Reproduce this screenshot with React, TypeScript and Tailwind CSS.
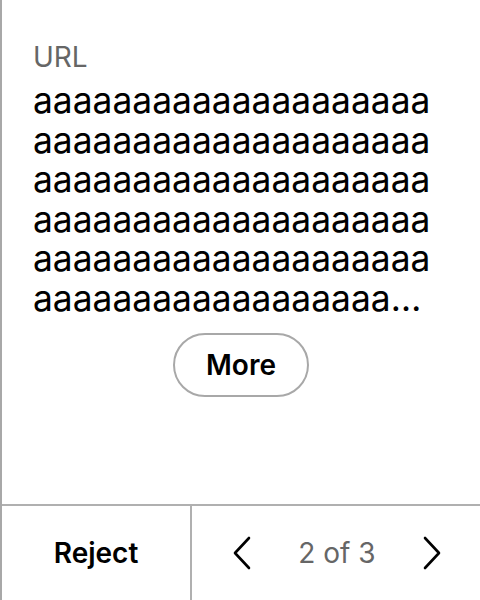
const url = 'a'.repeat(140)

function Chevron({ dir }: { dir: 'left' | 'right' }) {
  return (
    <svg width="20" height="34" viewBox="0 0 20 34" fill="none" stroke="currentColor" strokeWidth="2.6" strokeLinecap="round" strokeLinejoin="round">
      {dir === 'left' ? <polyline points="17,2 3,17 17,32" /> : <polyline points="3,2 17,17 3,32" />}
    </svg>
  )
}

export default function App() {
  return (
    <div
      className="flex h-[600px] w-[480px] flex-col border-l-2 border-[#a8a8a8] bg-white"
      style={{ fontFamily: 'Inter, "Noto Sans", sans-serif' }}
    >
      {/* Content */}
      <div className="flex flex-1 flex-col px-[31px] pt-[40px]">
        <div className="text-[28px] leading-[34px] text-[#666]">URL</div>
        <p className="mt-[7px] mr-[12px] line-clamp-6 break-all text-[35.4px] leading-[39.6px] text-black">{url}</p>
        <button className="mt-[14px] self-center rounded-full border-2 border-[#a8a8a8] px-[31px] py-[13px] text-[28px] font-semibold leading-[34px] text-black">
          More
        </button>
      </div>

      {/* Footer */}
      <div className="flex h-[96px] border-t-2 border-[#b0b0b0]">
        <button className="w-[190px] border-r-2 border-[#b0b0b0] text-[28px] font-semibold text-black">
          Reject
        </button>
        <div className="flex flex-1 items-center justify-center gap-[46px] pl-[2px]">
          <Chevron dir="left" />
          <span className="text-[28px] text-[#666]">2 of 3</span>
          <Chevron dir="right" />
        </div>
      </div>
    </div>
  )
}
